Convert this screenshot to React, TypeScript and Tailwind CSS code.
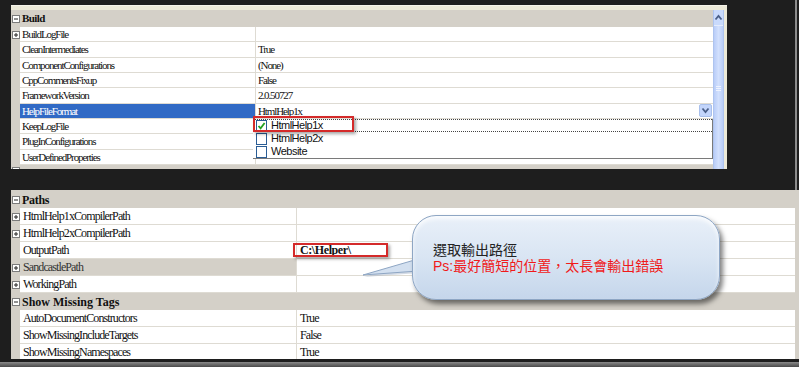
import React from "react";

interface PropRow {
  label: string;
  value?: string;
  expand?: "plus" | "minus";
  selected?: boolean;
  inactive?: boolean;
  bold?: boolean;
}

const buildRows: PropRow[] = [
  { label: "BuildLogFile", expand: "plus" },
  { label: "CleanIntermediates", value: "True" },
  { label: "ComponentConfigurations", value: "(None)" },
  { label: "CppCommentsFixup", value: "False" },
  { label: "FrameworkVersion", value: "2.0.50727" },
  { label: "HelpFileFormat", value: "HtmlHelp1x", selected: true },
  { label: "KeepLogFile" },
  { label: "PlugInConfigurations" },
  { label: "UserDefinedProperties" },
];

const pathRows: PropRow[] = [
  { label: "HtmlHelp1xCompilerPath", expand: "plus" },
  { label: "HtmlHelp2xCompilerPath", expand: "plus" },
  { label: "OutputPath", value: "C:\\Helper\\", bold: true },
  { label: "SandcastlePath", expand: "plus", inactive: true },
  { label: "WorkingPath", expand: "plus" },
];

const missingRows: PropRow[] = [
  { label: "AutoDocumentConstructors", value: "True" },
  { label: "ShowMissingIncludeTargets", value: "False" },
  { label: "ShowMissingNamespaces", value: "True" },
];

// small +/- box in the gutter
function ExpandBox({ kind }: { kind: "plus" | "minus" }) {
  return (
    <svg width="8" height="8" viewBox="0 0 8 8" className="block">
      <rect x="0.5" y="0.5" width="7" height="7" fill="#fff" stroke="#7b7b7b" />
      <line x1="2" y1="4" x2="6" y2="4" stroke="#222" />
      {kind === "plus" && <line x1="4" y1="2" x2="4" y2="6" stroke="#222" />}
    </svg>
  );
}

function Chevron({ up }: { up?: boolean }) {
  return (
    <svg width="9" height="7" viewBox="0 0 9 7">
      <path
        d={up ? "M1.5 5.5 L4.5 2 L7.5 5.5" : "M1.5 1.5 L4.5 5 L7.5 1.5"}
        fill="none"
        stroke="#4a5f88"
        strokeWidth="1.8"
      />
    </svg>
  );
}

function CheckBox({ checked }: { checked?: boolean }) {
  return (
    <svg width="11" height="12" viewBox="0 0 11 12" className="block shrink-0">
      <rect x="0.5" y="0.5" width="10" height="11" fill="#fff" stroke="#2a5d95" />
      {checked && (
        <path d="M2.5 6 L4.6 8.4 L8.6 3" fill="none" stroke="#21a121" strokeWidth="1.8" />
      )}
    </svg>
  );
}

function TopRow({ row }: { row: PropRow }) {
  return (
    <div className="flex h-[15.33px]">
      <div className="w-[9px] bg-[#d4d0c8] flex items-center justify-start pl-[1px]">
        {row.expand && <ExpandBox kind={row.expand} />}
      </div>
      <div
        className={`w-[235px] flex items-center pl-[2px] border-b border-[#dedbd3] ${
          row.selected ? "bg-[#316ac5] text-white" : "bg-white text-[#111]"
        }`}
      >
        {row.label}
      </div>
      <div className="w-[1px] bg-[#dedbd3]" />
      <div className="flex-1 flex items-center pl-[2px] bg-white border-b border-[#dedbd3] text-[#111]">
        <span className="flex-1">{row.value}</span>
        {row.selected && (
          <div className="w-[13px] h-[13px] mr-[1px] rounded-[2px] bg-[#c3d5fb] border border-[#a9c0ec] flex items-center justify-center">
            <Chevron />
          </div>
        )}
      </div>
    </div>
  );
}

function LowerRow({ row }: { row: PropRow }) {
  return (
    <div className="flex h-[17px]">
      <div className="w-[9px] bg-[#d4d0c8] flex items-center pl-[1px]">
        {row.expand && <ExpandBox kind={row.expand} />}
      </div>
      <div
        className={`w-[276px] flex items-center pl-[3px] border-b border-[#dedbd3] ${
          row.inactive ? "bg-[#d4d0c8] text-[#333]" : "bg-white text-[#111]"
        }`}
      >
        {row.label}
      </div>
      <div className="w-[1px] bg-[#dedbd3]" />
      <div
        className={`flex-1 flex items-center pl-[3px] bg-white border-b border-[#dedbd3] text-[#111] ${
          row.bold ? "font-bold tracking-[-0.4px]" : ""
        }`}
      >
        {row.value}
      </div>
    </div>
  );
}

function Category({
  title,
  height,
  className,
}: {
  title: string;
  height: string;
  className?: string;
}) {
  return (
    <div className={`flex items-center bg-[#d4d0c8] ${height}`}>
      <div className="w-[9px] flex items-center pl-[1px]">
        <ExpandBox kind="minus" />
      </div>
      <div className={`pl-[2px] font-bold text-[#111] ${className ?? ""}`}>{title}</div>
    </div>
  );
}

export default function App() {
  return (
    <div className="relative w-[799px] h-[367px] overflow-hidden bg-[#1e1e1e]">
      {/* upper screenshot: Build category with open drop down */}
      <div className="flex h-[190px] pt-[5px] pl-[11px]">
        <div className="relative w-[716px] h-[164px] overflow-hidden bg-[#ece9d8] pt-[4px] flex border-t border-[#f5f3ea]">
          <div className="w-[702px] font-['Liberation_Serif',serif] text-[11px] tracking-[-1.1px]">
            <Category title="Build" height="h-[17px]" className="tracking-[-0.6px]" />
            {buildRows.map((row) => (
              <TopRow key={row.label} row={row} />
            ))}
            <div className="flex items-start bg-[#d4d0c8] h-[17px]">
              <div className="w-[9px] pt-[2px] pl-[1px]">
                <ExpandBox kind="minus" />
              </div>
              <div className="pl-[2px] -mt-[1px] font-bold text-[#111] tracking-[-0.6px]">Comments</div>
            </div>
          </div>
          {/* scrollbar */}
          <div className="w-[11px] h-[160px] flex flex-col bg-[#c6d7fb] border-x border-[#aec4ef]">
            <div className="h-[16px] flex items-center justify-center bg-[#c9dafc] border-b border-[#e4ecfd]">
              <Chevron up />
            </div>
            <div className="flex-1 flex flex-col items-center justify-center gap-[1px] pb-[20px] bg-gradient-to-r from-[#b9cdf8] via-[#d2e0fd] to-[#b9cdf8]">
              <div className="w-[5px] h-[1px] bg-[#eef3ff]" />
              <div className="w-[5px] h-[1px] bg-[#eef3ff]" />
              <div className="w-[5px] h-[1px] bg-[#eef3ff]" />
            </div>
          </div>
          <div className="w-[3px]" />

          {/* open drop down list */}
          <div className="absolute left-[242px] top-[113px] w-[460px] h-[40px] bg-white border-r border-b border-[#7a7a7a] font-['Liberation_Sans',sans-serif] text-[11px] tracking-[-0.5px] text-[#111]">
            <div className="flex items-center gap-[4px] h-[13px] pl-[3px] border-t border-b border-dotted border-[#444]">
              <CheckBox checked />
              <span>HtmlHelp1x</span>
            </div>
            <div className="flex items-center gap-[4px] h-[13px] pl-[3px]">
              <CheckBox />
              <span>HtmlHelp2x</span>
            </div>
            <div className="flex items-center gap-[4px] h-[13px] pl-[3px]">
              <CheckBox />
              <span>Website</span>
            </div>
          </div>
        </div>
        <div className="flex-1" />
        <div className="w-[2px] -mt-[5px] mr-[2px] bg-[#8c8c8c]" />
      </div>

      {/* lower screenshot: Paths and Show Missing Tags */}
      <div className="ml-[11px] w-[788px] h-[169px] overflow-hidden bg-[#d4d0c8] pt-[2px] pr-[4px] font-['Liberation_Serif',serif] text-[12px] tracking-[-0.9px]">
        <Category title="Paths" height="h-[16px]" className="tracking-[-0.3px]" />
        {pathRows.map((row) => (
          <LowerRow key={row.label} row={row} />
        ))}
        <Category title="Show Missing Tags" height="h-[17px]" className="tracking-[0px]" />
        {missingRows.map((row) => (
          <LowerRow key={row.label} row={row} />
        ))}
      </div>
      <div className="h-[3px]" />
      <div className="h-[5px] bg-gradient-to-b from-[#8a8a8a] to-[#4a4a4a]" />

      {/* red highlight boxes */}
      <div className="absolute left-[253px] top-[116px] w-[101px] h-[16px] border-2 border-[#d42a2a] shadow-[2px_2px_3px_rgba(0,0,0,0.35)]" />
      <div className="absolute left-[293px] top-[243px] w-[95px] h-[14px] border-2 border-[#d42a2a] shadow-[2px_2px_3px_rgba(0,0,0,0.35)]" />

      {/* callout */}
      <svg
        className="absolute left-[360px] top-[254px]"
        width="60"
        height="26"
        viewBox="0 0 60 26"
      >
        <polygon points="3,21 58,5 58,17" fill="#a9b8cc" opacity="0.5" transform="translate(1,2)" />
        <polygon points="3,21 58,5 58,17" fill="#d3e0f0" />
        <path d="M58 5 L3 21 L58 17" fill="none" stroke="#8ea6c4" strokeWidth="1" />
      </svg>
      <div className="absolute left-[412px] top-[215px] w-[308px] h-[85px] rounded-[24px] border border-[#8ea6c4] bg-gradient-to-b from-[#e9f0f9] via-[#d9e5f3] to-[#c5d6eb] shadow-[3px_4px_5px_rgba(0,0,0,0.5),inset_0_3px_4px_rgba(255,255,255,0.8)] pl-[20px] pt-[26px] font-['Liberation_Sans','Noto_Sans_CJK_TC',sans-serif] text-[14px] leading-[16px]">
        <div className="text-[#222]">選取輸出路徑</div>
        <div className="text-[#f01a1a]">Ps:最好簡短的位置，太長會輸出錯誤</div>
      </div>
    </div>
  );
}
